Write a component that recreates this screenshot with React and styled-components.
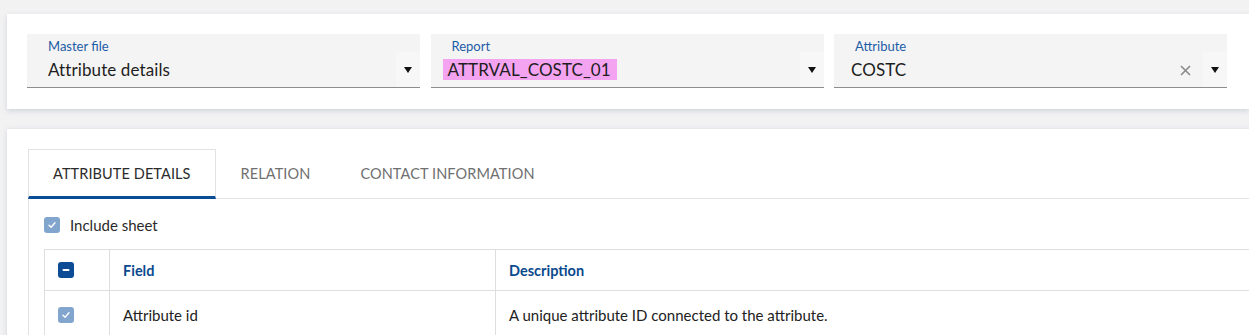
import React from "react";
import styled, { createGlobalStyle } from "styled-components";

const GlobalStyle = createGlobalStyle`
  html, body { margin: 0; padding: 0; }
  body {
    background: #f2f2f3;
    font-family: Lato, "Noto Sans", "Liberation Sans", sans-serif;
    color: #222;
    overflow: hidden;
    width: 1249px;
    height: 335px;
  }
`;

const Page = styled.div`
  display: flex;
  flex-direction: column;
  gap: 20px;
  padding: 14px 0 0 7px;
`;

const FilterCard = styled.section`
  background: #fff;
  box-shadow: 0 2px 5px rgba(70, 90, 120, 0.2);
  padding: 20px 20px 21px 20px;
  display: grid;
  grid-template-columns: repeat(3, 393px);
  column-gap: 10.5px;
  width: 1242px;
  box-sizing: border-box;
`;

const Field = styled.div`
  position: relative;
  height: 54px;
  box-sizing: border-box;
  background: #f4f4f4;
  border-bottom: 1px solid #8d8d8d;
  display: flex;
  flex-direction: column;
  padding: 5px 0 0 21px;
`;

const Label = styled.span`
  font-size: 13px;
  line-height: 15px;
  color: #1c5ca6;
`;

const Value = styled.span`
  margin-top: 5px;
  margin-left: ${(p) => p.$shift || 0}px;
  font-size: 17px;
  line-height: 22px;
  color: #1e1e1e;
  letter-spacing: 0.1px;
`;

const Highlight = styled.span`
  background: #f4a3f0;
  padding: 0 6px 0 5px;
`;

const ArrowBox = styled.div`
  position: absolute;
  right: 0;
  top: 18px;
  bottom: 0;
  width: 24px;
  background: #f7f7f7;
  display: flex;
  align-items: center;
  justify-content: center;
  &::after {
    content: "";
    width: 0;
    height: 0;
    border-left: 4.5px solid transparent;
    border-right: 4.5px solid transparent;
    border-top: 6px solid #111;
  }
`;

const ClearIcon = styled.svg`
  position: absolute;
  right: 36px;
  top: 31px;
  width: 11px;
  height: 11px;
`;

const ContentCard = styled.section`
  background: #fff;
  box-shadow: 0 1px 5px rgba(70, 90, 120, 0.2);
  padding: 20px 0 0 21px;
  width: 1300px;
  height: 240px;
  box-sizing: border-box;
`;

const TabBar = styled.div`
  display: flex;
  border-bottom: 1px solid #e2e2e2;
`;

const Tab = styled.div`
  height: 46px;
  padding: 0 24px 0 24px;
  display: flex;
  align-items: center;
  font-size: 14.5px;
  letter-spacing: 0.1px;
  text-transform: uppercase;
  color: ${(p) => (p.$active ? "#2b2b2b" : "#707070")};
  border: 1px solid ${(p) => (p.$active ? "#e2e2e2" : "transparent")};
  border-bottom: 3px solid ${(p) => (p.$active ? "#0a4d97" : "transparent")};
  margin-bottom: -1px;
`;

const Panel = styled.div`
  border-left: 1px solid #e2e2e2;
  padding: 17px 0 0 15px;
  height: 200px;
`;

const CheckRow = styled.label`
  display: flex;
  align-items: center;
  gap: 10px;
  font-size: 15px;
  color: #2a2a2a;
`;

const Box = styled.span`
  width: 16px;
  height: 16px;
  border-radius: 3px;
  background: ${(p) => (p.$dark ? "#0b4c94" : "#82a5cd")};
  display: inline-flex;
  align-items: center;
  justify-content: center;
  flex: none;
`;

const Table = styled.div`
  margin-top: 15px;
  border: 1px solid #dedede;
  border-bottom: none;
  width: 1300px;
`;

const Row = styled.div`
  display: grid;
  grid-template-columns: 64px 386px 1fr;
  height: ${(p) => (p.$head ? 40 : 48)}px;
  border-bottom: 1px solid #dedede;
`;

const Cell = styled.div`
  display: flex;
  align-items: center;
  padding-left: ${(p) => p.$pad || 13}px;
  font-size: ${(p) => (p.$head ? 14.5 : 15)}px;
  color: ${(p) => (p.$head ? "#0b4a8e" : "#222")};
  font-weight: ${(p) => (p.$head ? 700 : 400)};
  & + & {
    border-left: 1px solid #dedede;
  }
`;

const Check = () => (
  <svg width="10" height="10" viewBox="0 0 10 10">
    <path d="M2 5.2 L4.1 7.2 L8 2.8" fill="none" stroke="#fff" strokeWidth="1.4" strokeLinecap="round" strokeLinejoin="round" />
  </svg>
);

const Minus = () => (
  <svg width="10" height="10" viewBox="0 0 10 10">
    <path d="M2.5 5 H7.5" stroke="#fff" strokeWidth="2" strokeLinecap="round" />
  </svg>
);

export default function App() {
  return (
    <>
      <GlobalStyle />
      <Page>
        <FilterCard>
          <Field>
            <Label>Master file</Label>
            <Value>Attribute details</Value>
            <ArrowBox />
          </Field>
          <Field>
            <Label>Report</Label>
            <Value $shift={-9}>
              <Highlight>ATTRVAL_COSTC_01</Highlight>
            </Value>
            <ArrowBox />
          </Field>
          <Field>
            <Label>Attribute</Label>
            <Value $shift={-4}>COSTC</Value>
            <ClearIcon viewBox="0 0 11 11">
              <path d="M1 1 L10 10 M10 1 L1 10" stroke="#8a8a8a" strokeWidth="1.6" />
            </ClearIcon>
            <ArrowBox />
          </Field>
        </FilterCard>
        <ContentCard>
          <TabBar>
            <Tab $active>Attribute details</Tab>
            <Tab>Relation</Tab>
            <Tab>Contact information</Tab>
          </TabBar>
          <Panel>
            <CheckRow>
              <Box><Check /></Box>
              Include sheet
            </CheckRow>
            <Table>
              <Row $head>
                <Cell $pad={13}><Box $dark><Minus /></Box></Cell>
                <Cell $head>Field</Cell>
                <Cell $head>Description</Cell>
              </Row>
              <Row>
                <Cell $pad={13}><Box><Check /></Box></Cell>
                <Cell>Attribute id</Cell>
                <Cell>A unique attribute ID connected to the attribute.</Cell>
              </Row>
            </Table>
          </Panel>
        </ContentCard>
      </Page>
    </>
  );
}
